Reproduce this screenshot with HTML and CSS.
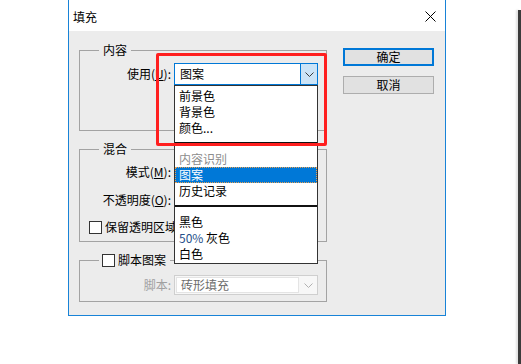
FILE: index.html
```html
<!DOCTYPE html>
<html lang="zh-CN">
	<head>
		<meta charset="utf-8">
		<title>填充</title>
		<meta name="viewport" content="width=device-width, initial-scale=1">
		<link rel="stylesheet" href="styles.css">
	</head>
	<body>
		<div class="desktop">
			<div class="dialog">
				<!-- Title bar -->
				<div class="titlebar">
					<span class="title">填充</span>
					<svg class="close" width="11" height="11" viewBox="0 0 11 11">
						<path d="M0.5 0.5L10.5 10.5M10.5 0.5L0.5 10.5" stroke="#000" stroke-width="1" fill="none"/>
					</svg>
				</div>

				<div class="dialog-body">
					<div class="groups">
						<!-- 内容 -->
						<fieldset class="group group-content">
							<legend class="legend">内容</legend>
							<div class="row">
								<label class="label">使用(<u>U</u>):</label>
								<div class="select-wrap">
									<div class="select is-open">
										<span class="select-text">图案</span>
										<span class="select-arrow">
											<svg width="9" height="5" viewBox="0 0 9 5"><path d="M0.5 0.5L4.5 4.5L8.5 0.5" fill="none" stroke="#3c3c3c"/></svg>
										</span>
									</div>
									<ul class="dropdown">
										<li class="option">前景色</li>
										<li class="option">背景色</li>
										<li class="option">颜色...</li>
										<li class="separator"></li>
										<li class="option disabled">内容识别</li>
										<li class="option selected">图案</li>
										<li class="option">历史记录</li>
										<li class="separator"></li>
										<li class="option">黑色</li>
										<li class="option"><span class="num">50%</span> 灰色</li>
										<li class="option">白色</li>
									</ul>
								</div>
							</div>
						</fieldset>

						<!-- 混合 (its controls sit under the open list) -->
						<fieldset class="group group-blend">
							<legend class="legend">混合</legend>
							<div class="row">
								<label class="label">模式(<u>M</u>):</label>
								<div class="select"></div>
							</div>
							<div class="row row-gap">
								<label class="label">不透明度(<u>O</u>):</label>
								<div class="input"></div>
							</div>
							<div class="check-row">
								<span class="checkbox"></span>
								<span class="check-text">保留透明区域</span>
							</div>
						</fieldset>

						<!-- 脚本图案 -->
						<fieldset class="group group-script">
							<legend class="legend legend-check">
								<span class="checkbox"></span>
								<span>脚本图案</span>
							</legend>
							<div class="row row-script">
								<label class="label label-disabled">脚本:</label>
								<div class="select disabled">
									<span class="select-text">砖形填充</span>
									<span class="select-arrow">
										<svg width="9" height="5" viewBox="0 0 9 5"><path d="M0.5 0.5L4.5 4.5L8.5 0.5" fill="none" stroke="#b0b0b0"/></svg>
									</span>
								</div>
							</div>
						</fieldset>
					</div>

					<div class="buttons">
						<button class="btn btn-default">确定</button>
						<button class="btn">取消</button>
					</div>
				</div>

				<!-- red annotation box -->
				<div class="annotation"></div>
			</div>

			<div class="edge"></div>
		</div>
	</body>
</html>
```

FILE: styles.css
```css
/* Reset */
*,
*::after,
*::before {
	box-sizing: border-box;
}

body {
	margin: 0;
	background: #fff;
	color: #000;
	font-family: "Noto Sans CJK SC", "Noto Sans", sans-serif;
	font-size: 12px;
	line-height: 16px;
}

u {
	text-underline-offset: 1px;
}

.desktop {
	display: flex;
	height: 364px;
	overflow: hidden;
}

/* Dialog */
.dialog {
	position: relative;
	margin-left: 68px;
	width: 378px;
	height: 316px;
	border: 1px solid #1883d7;
	border-top: 0;
	background: #ececec;
	display: flex;
	flex-direction: column;
}

.titlebar {
	height: 31px;
	flex: none;
	background: #fff;
	display: flex;
	align-items: center;
	justify-content: space-between;
	padding: 2px 9px 0 4px;
}

.dialog-body {
	display: flex;
	padding-left: 10px;
}

.groups {
	width: 248px;
	display: flex;
	flex-direction: column;
}

/* Group boxes */
.group {
	margin: 10px 0 0;
	padding: 0;
	min-width: 0;
	border: 1px solid #a3a3a3;
}

.legend {
	margin-left: 19px;
	padding: 0 4px;
	line-height: 16px;
	height: 16px;
}

.legend-check {
	display: flex;
	align-items: center;
	gap: 3px;
	padding: 0 4px 0 3px;
}

.group-content {
	margin-top: 11px;
	padding: 5px 0 45px;
}

.group-blend {
	padding: 4px 0 6px;
}

.group-script {
	padding: 7px 0 6px;
}

.row {
	display: flex;
	align-items: center;
	height: 22px;
}

.row-gap {
	margin-top: 6px;
}

.row-script {
	height: 20px;
}

.label {
	width: 91px;
	margin-right: 3px;
	text-align: right;
	white-space: nowrap;
}

.label-disabled {
	color: #a0a0a0;
}

.check-row {
	display: flex;
	align-items: center;
	gap: 3px;
	height: 16px;
	margin-top: 8px;
	padding-left: 9px;
	white-space: nowrap;
}

/* the open list covers the end of this label */
.check-text {
	width: 69px;
	overflow: hidden;
}

.checkbox {
	width: 13px;
	height: 13px;
	flex: none;
	border: 1px solid #333;
	background: #fff;
}

/* Combo boxes */
.select-wrap {
	position: relative;
}

.select {
	width: 144px;
	height: 22px;
	display: flex;
	align-items: stretch;
	border: 1px solid #7a7a7a;
	background: #fff;
}

.select.is-open {
	border-color: #0078d7;
}

.select-text {
	flex: 1;
	padding-left: 5px;
	display: flex;
	align-items: center;
}

.select-arrow {
	width: 17px;
	display: flex;
	align-items: center;
	justify-content: center;
}

.is-open .select-arrow {
	border-left: 1px solid #0078d7;
	background: #cce4f7;
}

.select.disabled {
	height: 20px;
	border-color: #cfcfcf;
	background: #f7f7f7;
	color: #6d6d6d;
}

.disabled .select-text {
	margin: 1px;
	border: 1px solid #e4e4e4;
	background: #fff;
	padding-left: 4px;
}

.input {
	width: 40px;
	height: 22px;
	border: 1px solid #7a7a7a;
	background: #fff;
}

/* Open dropdown list */
.dropdown {
	position: absolute;
	left: 0;
	top: 22px;
	z-index: 5;
	width: 144px;
	margin: 0;
	padding: 2px 0 1px;
	list-style: none;
	border: 1px solid #333;
	background: #fff;
}

.option {
	height: 16px;
	line-height: 16px;
	padding-left: 4px;
	white-space: nowrap;
}

.option.disabled {
	color: #8d8d8d;
}

.option.selected {
	background: #0078d7;
	color: #fff;
	outline: 1px dotted #e8a050;
	outline-offset: -1px;
}

.num {
	color: #26508a;
}

.separator {
	height: 15px;
	padding-top: 6px;
}

.separator::after {
	content: "";
	display: block;
	height: 2px;
	background: #111;
}

/* Buttons */
.buttons {
	width: 91px;
	margin: 17px 0 0 16px;
	display: flex;
	flex-direction: column;
	gap: 10px;
}

.btn {
	height: 18px;
	padding: 0;
	border: 1px solid #adadad;
	background: #e1e1e1;
	font: inherit;
	line-height: 14px;
	color: #000;
}

.btn-default {
	border: 2px solid #0078d7;
}

/* Red highlight box drawn over the dialog */
.annotation {
	position: absolute;
	left: 87px;
	top: 53px;
	z-index: 10;
	width: 171px;
	height: 93px;
	border: 3px solid #ff1f1f;
	border-radius: 2px;
}

/* Edge of the window behind */
.edge {
	width: 3px;
	margin: 10px 0 0 auto;
	background: #3b3b3b;
	box-shadow: -2px 0 2px rgba(0, 0, 0, 0.12);
}
```
